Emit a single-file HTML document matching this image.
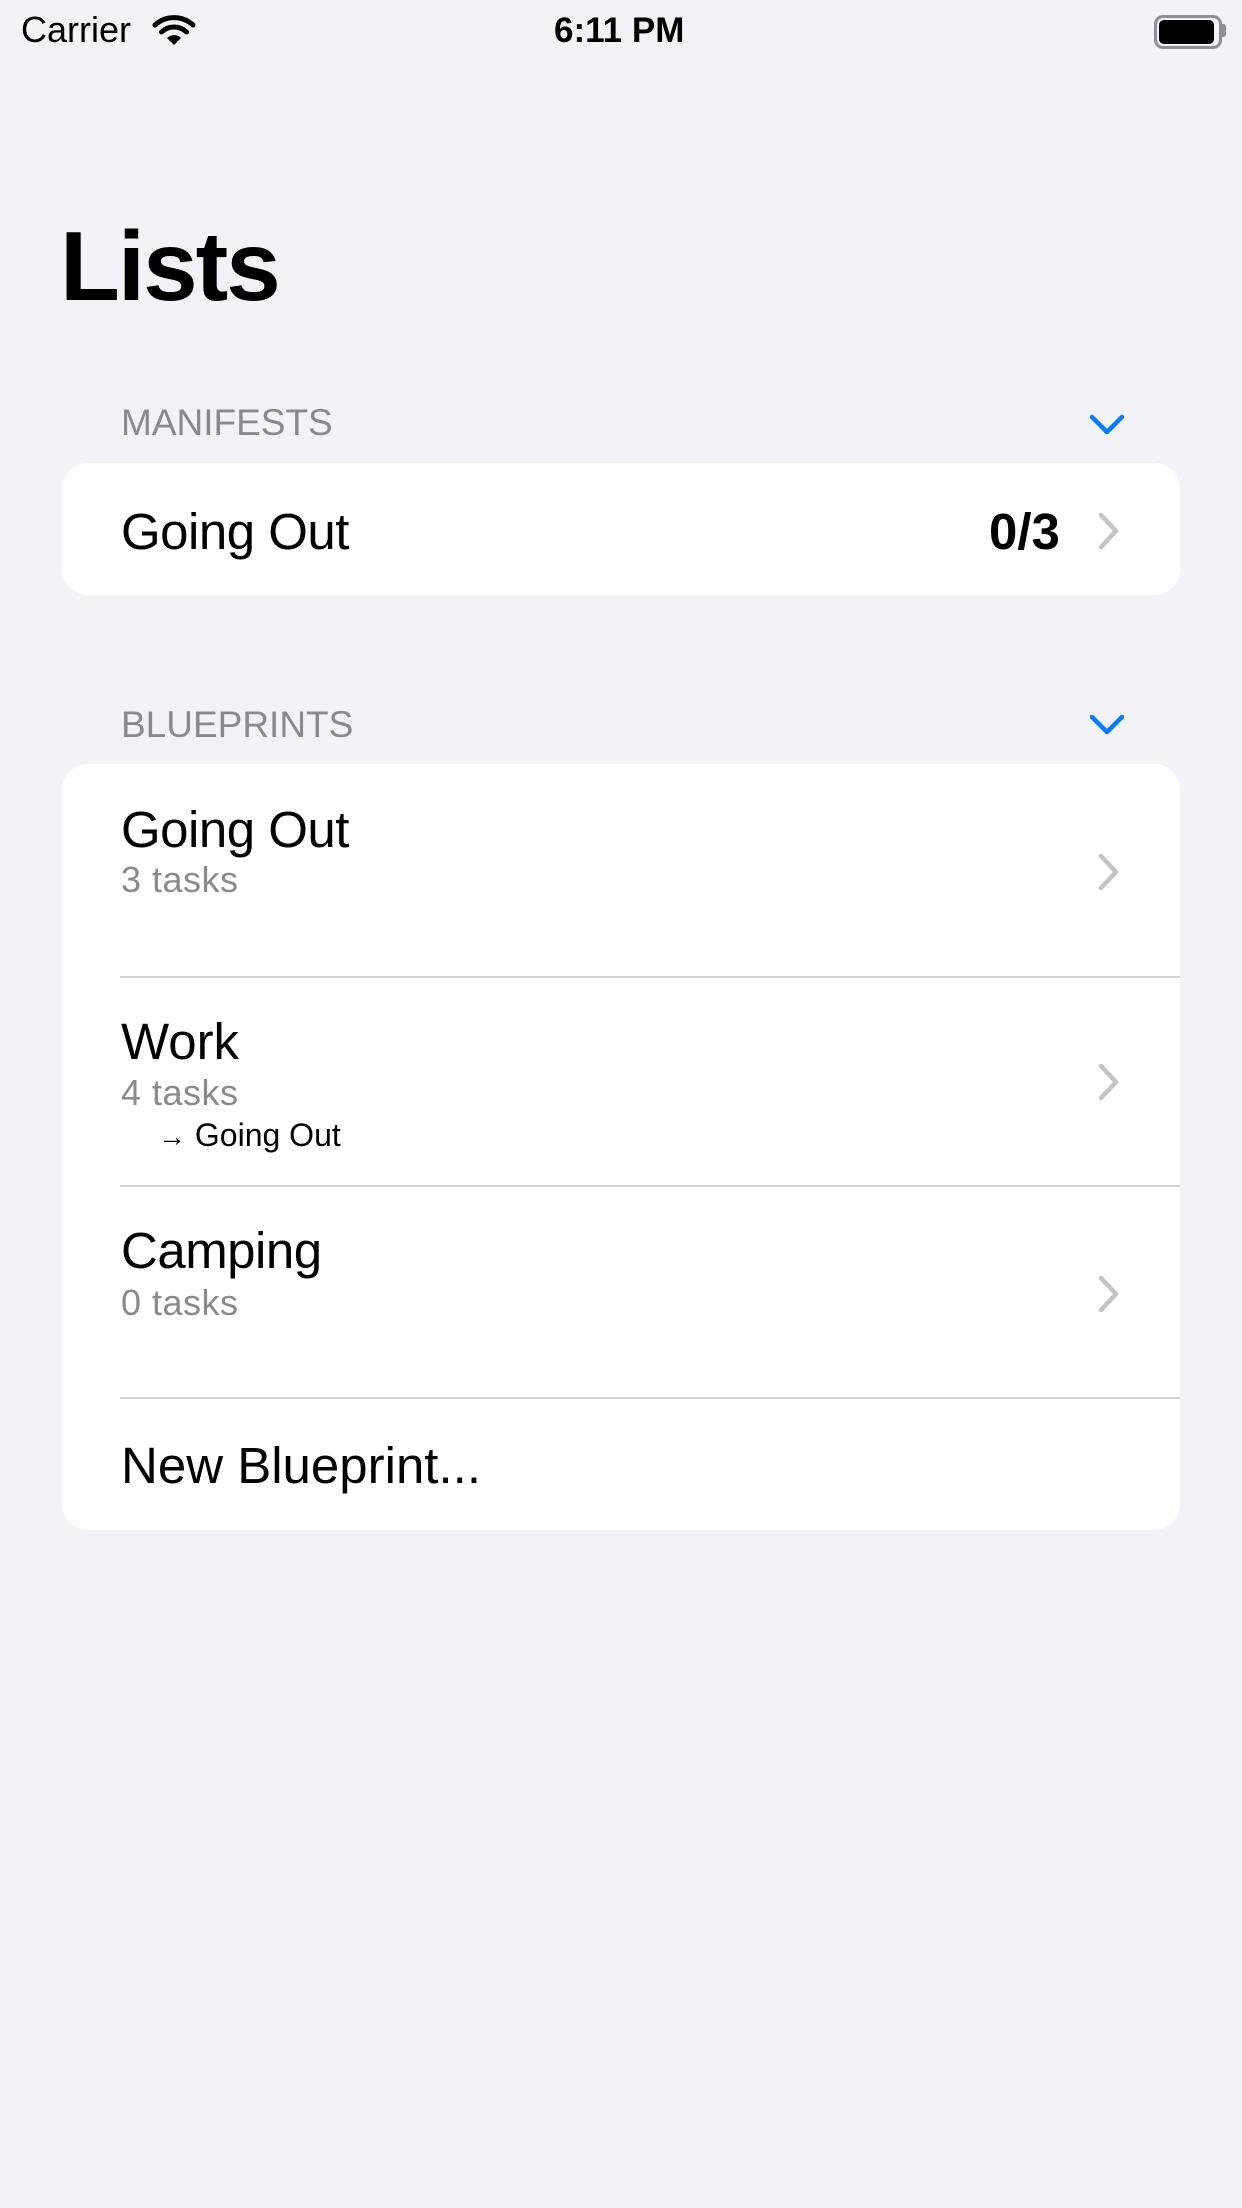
<!DOCTYPE html>
<html><head><meta charset="utf-8"><style>
body{margin:0;width:1242px;height:2208px;background:#f2f2f7;position:relative;overflow:hidden;font-family:"Liberation Sans",sans-serif;color:#000}
.t{position:absolute;line-height:1;white-space:nowrap}
.card{position:absolute;left:62px;width:1118px;background:#fff;border-radius:26px}
.sep{position:absolute;left:120px;right:62px;height:2px;background:#d1d1d6}
.sub{color:#8a8a8e;font-size:36px}
</style></head><body>
<div class="t" style="left:21px;top:12px;font-size:36px">Carrier</div>
<svg style="position:absolute;left:152px;top:14px" width="44" height="32" viewBox="0 0 44 32">
<path d="M3 11 A28 28 0 0 1 41 11" stroke="#000" stroke-width="5" fill="none" stroke-linecap="round"/>
<path d="M9.5 18 A18 18 0 0 1 34.5 18" stroke="#000" stroke-width="5" fill="none" stroke-linecap="round"/>
<path d="M22 31 L15 24 A10 10 0 0 1 29 24 Z" fill="#000"/>
</svg>
<div class="t" style="left:554px;top:13px;font-size:35px;font-weight:bold">6:11 PM</div>
<div style="position:absolute;left:1154px;top:15px;width:62px;height:28px;border:3px solid #8e8e93;border-radius:9px;box-sizing:content-box"></div>
<div style="position:absolute;left:1159px;top:20px;width:55px;height:24px;background:#000;border-radius:5px"></div>
<div style="position:absolute;left:1222px;top:24px;width:4px;height:13px;background:#8e8e93;border-radius:0 3px 3px 0"></div>

<div class="t" style="left:60px;top:217px;font-size:98px;font-weight:bold;letter-spacing:-2px">Lists</div>

<div class="t" style="left:121px;top:404px;font-size:37px;color:#8a8a8e">MANIFESTS</div>
<svg style="position:absolute;left:1089px;top:413px" width="36" height="24" viewBox="0 0 36 24"><path d="M3 4 L18 19 L33 4" stroke="#0a7aff" stroke-width="4.5" fill="none" stroke-linecap="round" stroke-linejoin="round"/></svg>
<div class="card" style="top:463px;height:132px"></div>
<div class="t" style="left:121px;top:506px;font-size:51px;letter-spacing:-0.5px">Going Out</div>
<div class="t" style="left:989px;top:506px;font-size:51px;font-weight:bold">0/3</div>
<svg style="position:absolute;left:1097px;top:512px" width="24" height="38" viewBox="0 0 24 38"><path d="M4 3 L19 19 L4 35" stroke="#c4c4c7" stroke-width="4.5" fill="none" stroke-linecap="round" stroke-linejoin="round"/></svg>

<div class="t" style="left:121px;top:706px;font-size:37px;color:#8a8a8e">BLUEPRINTS</div>
<svg style="position:absolute;left:1089px;top:713px" width="36" height="24" viewBox="0 0 36 24"><path d="M3 4 L18 19 L33 4" stroke="#0a7aff" stroke-width="4.5" fill="none" stroke-linecap="round" stroke-linejoin="round"/></svg>
<div class="card" style="top:764px;height:766px"></div>
<div class="sep" style="top:976px"></div>
<div class="sep" style="top:1185px"></div>
<div class="sep" style="top:1397px"></div>

<div class="t" style="left:121px;top:804px;font-size:51px;letter-spacing:-0.5px">Going Out</div>
<div class="t sub" style="left:121px;top:862px;letter-spacing:0.5px">3 tasks</div>
<svg style="position:absolute;left:1097px;top:853px" width="24" height="38" viewBox="0 0 24 38"><path d="M4 3 L19 19 L4 35" stroke="#c4c4c7" stroke-width="4.5" fill="none" stroke-linecap="round" stroke-linejoin="round"/></svg>

<div class="t" style="left:121px;top:1016px;font-size:51px">Work</div>
<div class="t sub" style="left:121px;top:1075px;letter-spacing:0.5px">4 tasks</div>
<div class="t" style="left:158px;top:1119px;font-size:32px"><span style="font-size:28px">→</span> Going Out</div>
<svg style="position:absolute;left:1097px;top:1063px" width="24" height="38" viewBox="0 0 24 38"><path d="M4 3 L19 19 L4 35" stroke="#c4c4c7" stroke-width="4.5" fill="none" stroke-linecap="round" stroke-linejoin="round"/></svg>

<div class="t" style="left:121px;top:1225px;font-size:51px;letter-spacing:-0.5px">Camping</div>
<div class="t sub" style="left:121px;top:1285px;letter-spacing:0.5px">0 tasks</div>
<svg style="position:absolute;left:1097px;top:1275px" width="24" height="38" viewBox="0 0 24 38"><path d="M4 3 L19 19 L4 35" stroke="#c4c4c7" stroke-width="4.5" fill="none" stroke-linecap="round" stroke-linejoin="round"/></svg>

<div class="t" style="left:121px;top:1440px;font-size:51px">New Blueprint...</div>
</body></html>
